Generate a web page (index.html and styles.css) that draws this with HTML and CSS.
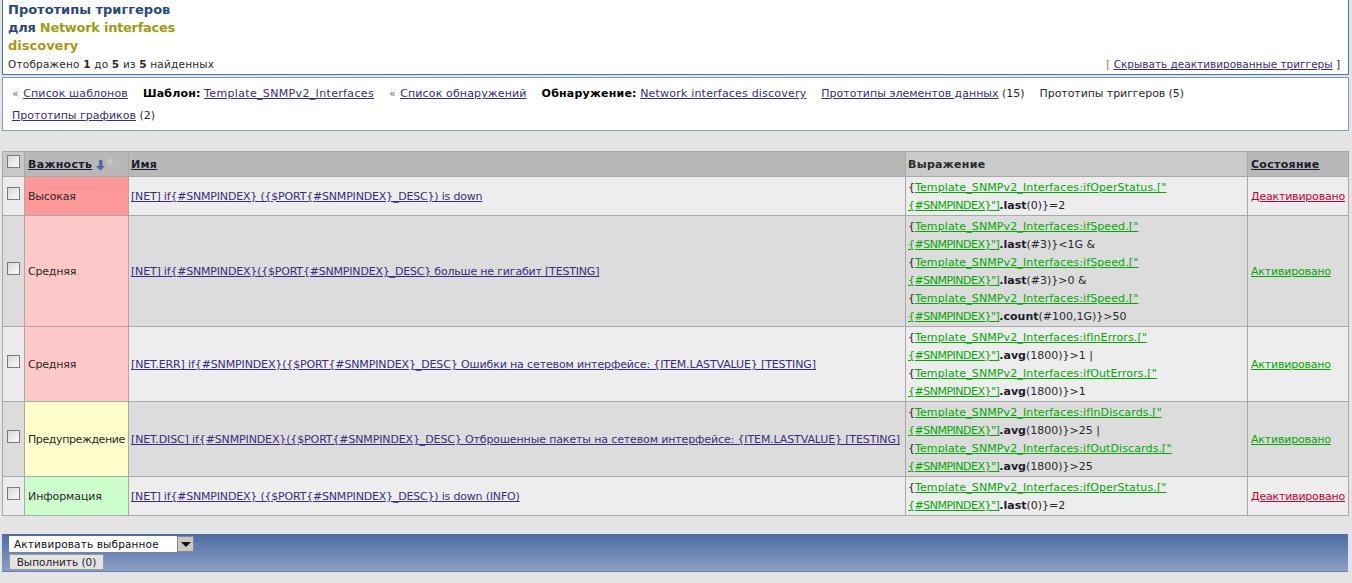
FILE: index.html
```html
<!DOCTYPE html>
<html lang="ru">
<head>
<meta charset="utf-8">
<title>Прототипы триггеров</title>
<link rel="stylesheet" href="styles.css">
</head>
<body>
<section class="head">
  <h1 class="title">Прототипы триггеров<br><span class="narrow">для <span class="olive">Network interfaces</span></span><br><span class="olive">discovery</span></h1>
  <div class="head-row">
    <span class="found">Отображено <b>1</b> до <b>5</b> из <b>5</b> найденных</span>
    <span class="toggle"><span class="br">[</span> <a href="#">Скрывать деактивированные триггеры</a> ]</span>
  </div>
</section>
<nav class="crumbs">
  <span class="crumb"><i>«</i> <a href="#" class="list">Список шаблонов</a></span>
  <span class="crumb"><b class="blk">Шаблон:</b> <a href="#" class="wide">Template_SNMPv2_Interfaces</a></span>
  <span class="crumb"><i>«</i> <a href="#" class="list">Список обнаружений</a></span>
  <span class="crumb"><b class="blk">Обнаружение:</b> <a href="#" class="disc">Network interfaces discovery</a></span>
  <span class="crumb"><a href="#">Прототипы элементов данных</a> (15)</span>
  <span class="crumb plain">Прототипы триггеров (5)</span>
  <span class="crumb"><a href="#">Прототипы графиков</a> (2)</span>
</nav>
<table class="grid">
  <colgroup><col class="c0"><col class="c1"><col class="c2"><col class="c3"><col class="c4"></colgroup>
  <thead>
    <tr>
      <th class="chk"><input type="checkbox"></th>
      <th><a href="#">Важность</a> <svg class="sort" width="22" height="14" viewBox="0 0 22 14"><path d="M15 1l4 4h-2.500v4h-3V5H11z" fill="#c9c9c9"/><path d="M7.500 3v6H10l-4.500 4.500L1 9h3V3z" fill="#4a6ca8"/></svg></th>
      <th class="pad"><a href="#">Имя</a></th>
      <th class="light pad">Выражение</th>
      <th><a href="#">Состояние</a></th>
    </tr>
  </thead>
  <tbody>
    <tr class="odd">
      <td class="chk"><input type="checkbox"></td>
      <td class="high">Высокая</td>
      <td class="name tight"><a href="#">[NET] if{#SNMPINDEX} ({$PORT{#SNMPINDEX}_DESC}) is down</a></td>
      <td class="expr">{<a href="#" class="g">Template_SNMPv2_Interfaces:ifOperStatus.["<br><span class="idx">{#SNMPINDEX}"]</span></a><b>.last</b>(0)}=2</td>
      <td class="state"><a href="#" class="r">Деактивировано</a></td>
    </tr>
    <tr class="even">
      <td class="chk"><input type="checkbox"></td>
      <td class="avg">Средняя</td>
      <td class="name tight"><a href="#">[NET] if{#SNMPINDEX}({$PORT{#SNMPINDEX}_DESC} больше не гигабит [TESTING]</a></td>
      <td class="expr">{<a href="#" class="g">Template_SNMPv2_Interfaces:ifSpeed.["<br><span class="idx">{#SNMPINDEX}"]</span></a><b>.last</b>(#3)}&lt;1G &amp;<br>{<a href="#" class="g">Template_SNMPv2_Interfaces:ifSpeed.["<br><span class="idx">{#SNMPINDEX}"]</span></a><b>.last</b>(#3)}&gt;0 &amp;<br>{<a href="#" class="g">Template_SNMPv2_Interfaces:ifSpeed.["<br><span class="idx">{#SNMPINDEX}"]</span></a><b>.count</b>(#100,1G)}&gt;50</td>
      <td class="state"><a href="#" class="g">Активировано</a></td>
    </tr>
    <tr class="odd">
      <td class="chk"><input type="checkbox"></td>
      <td class="avg">Средняя</td>
      <td class="name"><a href="#">[NET.ERR] if{#SNMPINDEX}({$PORT{#SNMPINDEX}_DESC} Ошибки на сетевом интерфейсе: {ITEM.LASTVALUE} [TESTING]</a></td>
      <td class="expr">{<a href="#" class="g">Template_SNMPv2_Interfaces:ifInErrors.["<br><span class="idx">{#SNMPINDEX}"]</span></a><b>.avg</b>(1800)}&gt;1 |<br>{<a href="#" class="g">Template_SNMPv2_Interfaces:ifOutErrors.["<br><span class="idx">{#SNMPINDEX}"]</span></a><b>.avg</b>(1800)}&gt;1</td>
      <td class="state"><a href="#" class="g">Активировано</a></td>
    </tr>
    <tr class="even">
      <td class="chk"><input type="checkbox"></td>
      <td class="warn">Предупреждение</td>
      <td class="name"><a href="#">[NET.DISC] if{#SNMPINDEX}({$PORT{#SNMPINDEX}_DESC} Отброшенные пакеты на сетевом интерфейсе: {ITEM.LASTVALUE} [TESTING]</a></td>
      <td class="expr">{<a href="#" class="g">Template_SNMPv2_Interfaces:ifInDiscards.["<br><span class="idx">{#SNMPINDEX}"]</span></a><b>.avg</b>(1800)}&gt;25 |<br>{<a href="#" class="g">Template_SNMPv2_Interfaces:ifOutDiscards.["<br><span class="idx">{#SNMPINDEX}"]</span></a><b>.avg</b>(1800)}&gt;25</td>
      <td class="state"><a href="#" class="g">Активировано</a></td>
    </tr>
    <tr class="odd">
      <td class="chk"><input type="checkbox"></td>
      <td class="info">Информация</td>
      <td class="name tight"><a href="#">[NET] if{#SNMPINDEX} ({$PORT{#SNMPINDEX}_DESC}) is down (INFO)</a></td>
      <td class="expr">{<a href="#" class="g">Template_SNMPv2_Interfaces:ifOperStatus.["<br><span class="idx">{#SNMPINDEX}"]</span></a><b>.last</b>(0)}=2</td>
      <td class="state"><a href="#" class="r">Деактивировано</a></td>
    </tr>
  </tbody>
</table>
<footer class="actions">
  <div class="select"><span class="select-text">Активировать выбранное</span><span class="select-btn"><svg width="10" height="5" viewBox="0 0 10 5"><path d="M0 0h10L5 5z" fill="#111"/></svg></span></div>
  <button class="go" type="button">Выполнить (0)</button>
</footer>
</body>
</html>
```
FILE: styles.css
```css
* { box-sizing: border-box; }
html, body { margin: 0; padding: 0; }
body {
  background: #e4e4e4;
  color: #2a2a2a;
  font: 11px/18px "DejaVu Sans", Verdana, sans-serif;
  height: 583px;
  overflow: hidden;
  padding: 0 3px 0 2px;
}
a { color: #3b2c82; }
b { font-weight: 700; }
.head {
  background: #fff;
  border: 1px solid #3f79ae;
  border-top: 0;
  height: 75px;
  padding: 1px 5px 0;
}
.title {
  margin: 0;
  font-size: 13px;
  line-height: 18px;
  font-weight: 700;
  color: #26487f;
}
.narrow { letter-spacing: -0.28px; }
.olive { color: #a39a12; }
.head-row {
  display: flex;
  justify-content: space-between;
  padding-right: 3px;
  font-size: 10.5px;
}
.found { letter-spacing: 0.2px; }
.br { color: #c8672c; }
.crumbs {
  background: #fff;
  border: 1px solid #7f9fc0;
  height: 54px;
  margin-top: 2px;
  padding: 5px 130px 4px 9px;
  line-height: 22px;
  display: flex;
  flex-wrap: wrap;
  column-gap: 15px;
}
.crumb { white-space: nowrap; }
.crumb i { font-style: normal; color: #6a6a6a; }
.blk { color: #000; letter-spacing: 0.2px; }
.list { letter-spacing: 0.13px; margin-left: 1px; }
.wide { letter-spacing: 0.34px; }
.disc { letter-spacing: 0.2px; }
.plain { letter-spacing: -0.08px; }
.grid {
  border-collapse: collapse;
  table-layout: fixed;
  width: 1346px;
  margin-top: 20px;
}
.c0 { width: 22px; }
.c1 { width: 104px; }
.c2 { width: 777px; }
.c3 { width: 342px; }
.c4 { width: 101px; }
.grid th, .grid td {
  border: 1px solid #a9a9a9;
  padding: 2px 3px 0;
  text-align: left;
  white-space: nowrap;
}
.grid th {
  background: #b8b8b8;
  height: 25px;
  font-weight: 700;
  letter-spacing: 0.3px;
}
.grid th.pad { padding-left: 2px; }
.grid th a { color: #1c1c2c; }
.grid th.light { background: #cacaca; }
.grid .chk { background: #ececec; padding: 0; text-align: center; vertical-align: middle; }
.grid th.chk { background: #c8c8c8; }
.grid .even .chk { background: #dcdcdc; }
.chk input {
  appearance: none;
  width: 13px;
  height: 13px;
  margin: 0 0 6px;
  display: inline-block;
  vertical-align: middle;
  border: 1px solid #7a7a7a;
  background: linear-gradient(135deg, #d8d8d8, #fafafa);
}
.sort { vertical-align: -3px; margin-left: -1px; }
.odd td { background: #ededed; }
.even td { background: #dcdcdc; }
.grid td.high { background: #ff9999; letter-spacing: -0.2px; }
.grid td.avg { background: #ffc8c8; letter-spacing: -0.2px; }
.grid td.warn { background: #ffffcc; letter-spacing: -0.4px; }
.grid td.info { background: #ccffcc; letter-spacing: -0.1px; }
.grid td.name { padding-left: 2px; letter-spacing: -0.13px; }
.grid td.tight { letter-spacing: -0.19px; }
.grid td.state { letter-spacing: -0.2px; }
.grid td.expr { line-height: 18px; padding: 2px 2px 0; }
.expr .g { letter-spacing: 0.12px; }
.expr .idx { letter-spacing: -0.5px; }
.expr b { color: #1c1c2c; }
.grid a.g { color: #00aa00; }
.grid a.r { color: #cc0033; }
.actions {
  margin-top: 18px;
  width: 1346px;
  height: 38px;
  padding: 2px 7px;
  border-bottom: 1px solid #5f7fb4;
  background: linear-gradient(#4d6ca6, #8a9fc4);
}
.select {
  display: flex;
  width: 185px;
  height: 16px;
  background: #fff;
  font-size: 10.5px;
  letter-spacing: 0.15px;
  line-height: 16px;
  color: #111;
}
.select-text { flex: 1; padding-left: 5px; }
.select-btn {
  width: 17px;
  background: #c8c8c8;
  border: 1px solid #888;
  display: flex;
  align-items: center;
  justify-content: center;
}
.go {
  display: block;
  margin-top: 2px;
  height: 16px;
  width: 95px;
  padding: 0;
  border: 1px solid #999;
  background: #e4e4e4;
  font: 10.5px/14px "DejaVu Sans", Verdana, sans-serif;
  color: #222;
}
```
